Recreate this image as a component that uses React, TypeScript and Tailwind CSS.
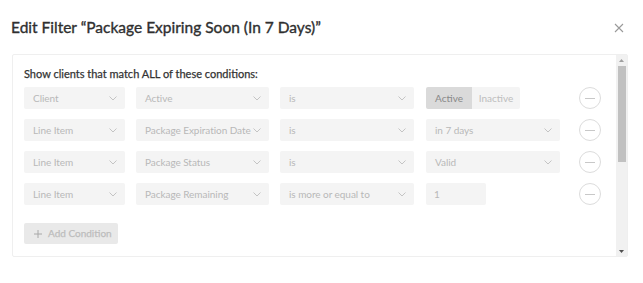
import React from "react";

const Chevron = () => (
  <svg width="8" height="5" viewBox="0 0 8 5" fill="none" className="shrink-0">
    <path d="M0.5 0.5l3.5 3.5L7.5 0.5" stroke="#c4c4c4" strokeWidth="1" />
  </svg>
);

const Select = ({ label, w }: { label: string; w: string }) => (
  <div className={`${w} h-[22px] bg-[#f4f4f4] rounded-[2px] flex items-center justify-between pl-[9px] pr-[8px] text-[10px] tracking-[-0.05px] text-[#b8b8b8] shrink-0`}>
    <span className="whitespace-nowrap">{label}</span>
    <Chevron />
  </div>
);

const Minus = () => (
  <div className="w-[22px] h-[22px] rounded-full border border-[#dcdcdc] flex items-center justify-center ml-auto mr-[15px] shrink-0">
    <div className="w-[10px] h-px bg-[#c8c8c8]" />
  </div>
);

export default function App() {
  const rows = [
    { a: "Client", b: "Active", c: "is", d: "toggle" },
    { a: "Line Item", b: "Package Expiration Date", c: "is", d: "in 7 days" },
    { a: "Line Item", b: "Package Status", c: "is", d: "Valid" },
    { a: "Line Item", b: "Package Remaining", c: "is more or equal to", d: "input" },
  ];
  return (
    <div className="w-[643px] h-[283px] bg-white relative" style={{ fontFamily: "Lato, 'Noto Sans', sans-serif" }}>
      <div className="flex items-center justify-between pl-[11px] pr-[19px] pt-[13px] h-[42px]">
        <h1 className="text-[15.5px] font-normal text-[#2f2f2f] leading-none [-webkit-text-stroke:0.35px_#2f2f2f]">
          Edit Filter “Package Expiring Soon (In 7 Days)”
        </h1>
        <svg width="10" height="10" viewBox="0 0 10 10" className="mt-[1px]">
          <path d="M1 1l8 8M9 1l-8 8" stroke="#9a9a9a" strokeWidth="1.1" />
        </svg>
      </div>
      <div className="ml-[12px] mt-[12px] w-[616px] h-[203px] border border-[#efefef] rounded-[2px] flex">
        <div className="flex-1 pl-[11px] pt-[13px]">
          <div className="text-[11px] font-normal text-[#333] leading-none mb-[8px] [-webkit-text-stroke:0.25px_#333]">
            Show clients that match ALL of these conditions:
          </div>
          <div className="flex flex-col gap-[10px]">
            {rows.map((r, i) => (
              <div key={i} className="flex items-center">
                <Select label={r.a} w="w-[101px]" />
                <div className="w-[11px]" />
                <Select label={r.b} w="w-[133px]" />
                <div className="w-[11px]" />
                <Select label={r.c} w="w-[134px]" />
                <div className="w-[12px]" />
                {r.d === "toggle" ? (
                  <div className="flex h-[22px] w-[94px] text-[10px] rounded-[2px] overflow-hidden shrink-0">
                    <div className="w-[46px] bg-[#dadada] text-[#888] flex items-center justify-center">Active</div>
                    <div className="flex-1 bg-[#f4f4f4] text-[#bdbdbd] flex items-center justify-center">Inactive</div>
                  </div>
                ) : r.d === "input" ? (
                  <div className="w-[60px] h-[22px] bg-[#f4f4f4] rounded-[2px] flex items-center pl-[8px] text-[10px] text-[#b8b8b8] shrink-0">1</div>
                ) : (
                  <Select label={r.d} w="w-[134px]" />
                )}
                <Minus />
              </div>
            ))}
          </div>
          <div className="mt-[18px] w-[94px] h-[21px] bg-[#e9e9e9] rounded-[2px] flex items-center pl-[10px] gap-[6px] text-[10px] font-normal text-[#bdbdbd] [-webkit-text-stroke:0.25px_#bdbdbd]">
            <svg width="8" height="8" viewBox="0 0 8 8">
              <path d="M4 0v8M0 4h8" stroke="#a8a8a8" strokeWidth="1" />
            </svg>
            <span>Add Condition</span>
          </div>
        </div>
        <div className="w-[11px] bg-[#f1f1f1] flex flex-col items-center py-[2px]">
          <svg width="5" height="3" viewBox="0 0 5 3" className="mt-[2px]"><path d="M0 3L2.5 0L5 3z" fill="#a0a0a0" /></svg>
          <div className="w-[8px] h-[96px] bg-[#c1c1c1] mt-[4px]" />
          <div className="flex-1" />
          <svg width="5" height="3" viewBox="0 0 5 3" className="mb-[1px]"><path d="M0 0L2.5 3L5 0z" fill="#505050" /></svg>
        </div>
      </div>
    </div>
  );
}
